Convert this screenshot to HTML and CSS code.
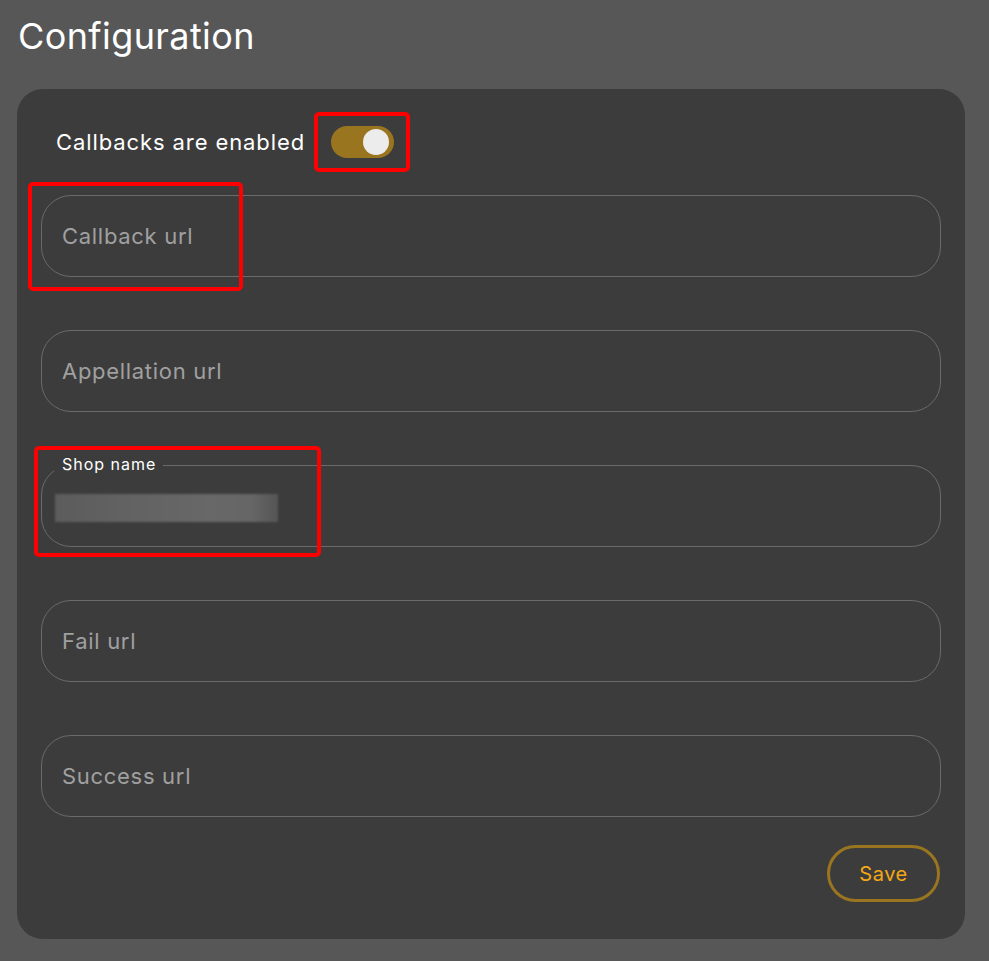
FILE: index.html
```html
<!DOCTYPE html>
<html lang="en">
<head>
<meta charset="utf-8">
<title>Configuration</title>
<link rel="stylesheet" href="styles.css">
</head>
<body>
<h1 class="title">Configuration</h1>
<section class="card">
  <div class="toggle-row">
    <span class="toggle-label">Callbacks are enabled</span>
    <div class="mark mark-toggle">
      <span class="switch"><span class="knob"></span></span>
    </div>
  </div>
  <div class="fields">
    <div class="field">
      <input class="input" type="text" placeholder="Callback url">
      <span class="mark mark-callback"></span>
    </div>
    <div class="field">
      <input class="input" type="text" placeholder="Appellation url">
    </div>
    <div class="field">
      <div class="input notched">
        <span class="legend">Shop name</span>
        <span class="blurred"></span>
      </div>
      <span class="mark mark-shop"></span>
    </div>
    <div class="field">
      <input class="input" type="text" placeholder="Fail url">
    </div>
    <div class="field">
      <input class="input" type="text" placeholder="Success url">
    </div>
  </div>
  <div class="actions">
    <button class="save" type="button">Save</button>
  </div>
</section>
</body>
</html>
```
FILE: styles.css
```css
* { box-sizing: border-box; }
html, body { margin: 0; }
body {
  background: #575757;
  font-family: Inter, "Noto Sans", sans-serif;
  color: #fff;
  width: 989px;
  height: 961px;
  overflow: hidden;
  padding: 0 24px 0 17px;
}
.title {
  margin: 0;
  padding: 13px 0 0 1px;
  height: 89px;
  font-size: 36px;
  letter-spacing: 0.4px;
  line-height: 46px;
  font-weight: 400;
  color: #fff;
}
.card {
  background: #3c3c3c;
  border-radius: 26px;
  height: 850px;
  padding: 23px 24px 37px 24px;
  display: flex;
  flex-direction: column;
}
.toggle-row {
  display: flex;
  align-items: center;
  gap: 9px;
  padding-left: 15px;
  height: 60px;
}
.toggle-label {
  font-size: 22px;
  letter-spacing: 0.9px;
  color: #fff;
}
.mark {
  border: 4px solid #ff0000;
  border-radius: 5px;
}
.mark-toggle {
  width: 96px;
  height: 60px;
  display: flex;
  align-items: center;
  justify-content: center;
  padding-left: 1px;
}
.switch {
  width: 63px;
  height: 32px;
  border-radius: 16px;
  background: #9a7520;
  display: flex;
  align-items: center;
  justify-content: flex-end;
  padding-right: 5px;
}
.knob {
  width: 26px;
  height: 26px;
  border-radius: 50%;
  background: #ececec;
}
.fields {
  margin-top: 23px;
  display: flex;
  flex-direction: column;
  gap: 53px;
}
.field {
  position: relative;
}
.input {
  display: block;
  width: 100%;
  height: 82px;
  border: 1px solid #6a6a6a;
  border-radius: 30px;
  background: transparent;
  padding: 0 20px;
  font-family: inherit;
  font-size: 22px;
  letter-spacing: 0.7px;
  color: #fff;
  outline: none;
}
.input::placeholder { color: #a0a0a0; }
.notched {
  position: relative;
  display: flex;
  align-items: center;
  padding-left: 13px;
}
.legend {
  position: absolute;
  top: -12px;
  left: 12px;
  padding: 0 7px 0 8px;
  background: #3c3c3c;
  font-size: 16px;
  letter-spacing: 1px;
  line-height: 20px;
  color: #fff;
}
.blurred {
  width: 223px;
  height: 28px;
  margin-top: 3px;
  background: linear-gradient(90deg, #5c5c5c 0%, #626262 30%, #686868 70%, #666 88%, #555 100%);
  filter: blur(1px);
}
.mark-callback {
  position: absolute;
  left: -13px;
  top: -13px;
  width: 215px;
  height: 109px;
}
.mark-shop {
  position: absolute;
  left: -7px;
  top: -19px;
  width: 287px;
  height: 111px;
}
.actions {
  margin-top: auto;
  display: flex;
  justify-content: flex-end;
  padding-right: 1px;
}
.save {
  width: 113px;
  height: 57px;
  border: 3px solid #9a7520;
  border-radius: 29px;
  background: transparent;
  color: #f5a815;
  font-family: inherit;
  font-size: 20px;
  letter-spacing: 0.5px;
  cursor: pointer;
}
```
